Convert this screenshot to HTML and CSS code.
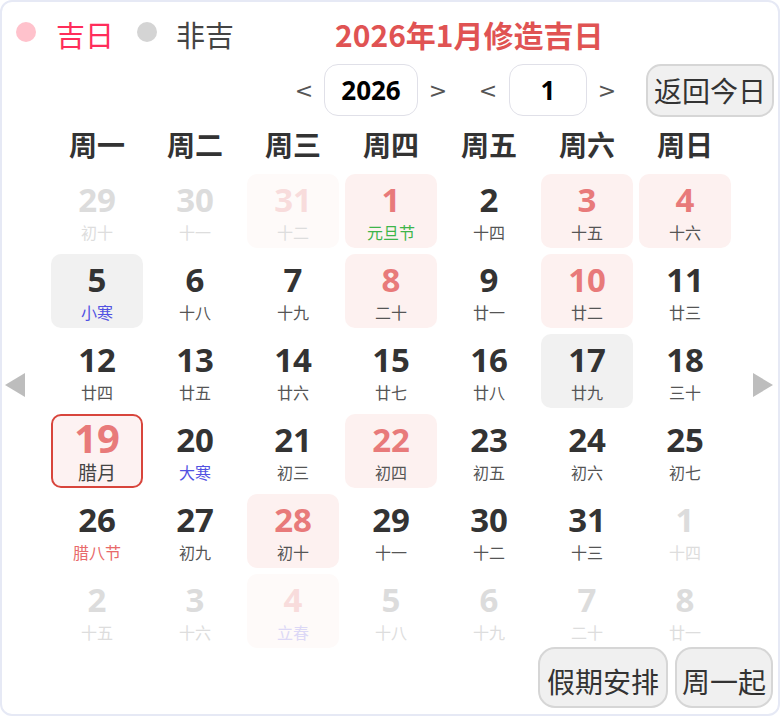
FILE: index.html
```html
<!DOCTYPE html>
<html lang="zh-CN">
<head>
<meta charset="utf-8">
<title>2026年1月修造吉日</title>
<link rel="stylesheet" href="styles.css">
</head>
<body>
<div class="cal">
  <div class="legend">
    <span class="dot dot-good"></span><span class="lg-text good">吉日</span>
    <span class="dot dot-bad"></span><span class="lg-text bad">非吉</span>
    <span class="title">2026年1月修造吉日</span>
  </div>
  <div class="controls">
    <span class="arr">&lt;</span>
    <span class="box box-year">2026</span>
    <span class="arr arr-r arr-r1">&gt;</span>
    <span class="arr arr-l2">&lt;</span>
    <span class="box box-month">1</span>
    <span class="arr arr-r arr-r2">&gt;</span>
    <span class="btn btn-today">返回今日</span>
  </div>
  <div class="body">
    <div class="side side-l"><span class="tri tri-l"></span></div>
    <div class="main">
      <div class="weekdays">
        <span>周一</span><span>周二</span><span>周三</span><span>周四</span><span>周五</span><span>周六</span><span>周日</span>
      </div>
      <div class="grid">
        <div class="cell other"><span class="num">29</span><span class="lun">初十</span></div>
        <div class="cell other"><span class="num">30</span><span class="lun">十一</span></div>
        <div class="cell other good-faded"><span class="num">31</span><span class="lun">十二</span></div>
        <div class="cell good"><span class="num">1</span><span class="lun fest-green">元旦节</span></div>
        <div class="cell"><span class="num">2</span><span class="lun">十四</span></div>
        <div class="cell good"><span class="num">3</span><span class="lun">十五</span></div>
        <div class="cell good"><span class="num">4</span><span class="lun">十六</span></div>

        <div class="cell grey"><span class="num">5</span><span class="lun term">小寒</span></div>
        <div class="cell"><span class="num">6</span><span class="lun">十八</span></div>
        <div class="cell"><span class="num">7</span><span class="lun">十九</span></div>
        <div class="cell good"><span class="num">8</span><span class="lun">二十</span></div>
        <div class="cell"><span class="num">9</span><span class="lun">廿一</span></div>
        <div class="cell good"><span class="num">10</span><span class="lun">廿二</span></div>
        <div class="cell"><span class="num">11</span><span class="lun">廿三</span></div>

        <div class="cell"><span class="num">12</span><span class="lun">廿四</span></div>
        <div class="cell"><span class="num">13</span><span class="lun">廿五</span></div>
        <div class="cell"><span class="num">14</span><span class="lun">廿六</span></div>
        <div class="cell"><span class="num">15</span><span class="lun">廿七</span></div>
        <div class="cell"><span class="num">16</span><span class="lun">廿八</span></div>
        <div class="cell grey"><span class="num">17</span><span class="lun">廿九</span></div>
        <div class="cell"><span class="num">18</span><span class="lun">三十</span></div>

        <div class="cell good selected"><span class="num">19</span><span class="lun">腊月</span></div>
        <div class="cell"><span class="num">20</span><span class="lun term">大寒</span></div>
        <div class="cell"><span class="num">21</span><span class="lun">初三</span></div>
        <div class="cell good"><span class="num">22</span><span class="lun">初四</span></div>
        <div class="cell"><span class="num">23</span><span class="lun">初五</span></div>
        <div class="cell"><span class="num">24</span><span class="lun">初六</span></div>
        <div class="cell"><span class="num">25</span><span class="lun">初七</span></div>

        <div class="cell"><span class="num">26</span><span class="lun fest-red">腊八节</span></div>
        <div class="cell"><span class="num">27</span><span class="lun">初九</span></div>
        <div class="cell good"><span class="num">28</span><span class="lun">初十</span></div>
        <div class="cell"><span class="num">29</span><span class="lun">十一</span></div>
        <div class="cell"><span class="num">30</span><span class="lun">十二</span></div>
        <div class="cell"><span class="num">31</span><span class="lun">十三</span></div>
        <div class="cell other"><span class="num">1</span><span class="lun">十四</span></div>

        <div class="cell other"><span class="num">2</span><span class="lun">十五</span></div>
        <div class="cell other"><span class="num">3</span><span class="lun">十六</span></div>
        <div class="cell other good-faded"><span class="num">4</span><span class="lun term-faded">立春</span></div>
        <div class="cell other"><span class="num">5</span><span class="lun">十八</span></div>
        <div class="cell other"><span class="num">6</span><span class="lun">十九</span></div>
        <div class="cell other"><span class="num">7</span><span class="lun">二十</span></div>
        <div class="cell other"><span class="num">8</span><span class="lun">廿一</span></div>
      </div>
    </div>
    <div class="side side-r"><span class="tri tri-r"></span></div>
  </div>
  <div class="footer">
    <span class="btn btn-foot btn-holiday">假期安排</span>
    <span class="btn btn-foot btn-week">周一起</span>
  </div>
</div>
</body>
</html>
```

FILE: styles.css
```css
* { box-sizing: border-box; }
html, body { margin: 0; padding: 0; background: #ffffff; }
body {
  font-family: "Noto Sans CJK SC", "Noto Sans", sans-serif;
  color: #333;
}
.cal {
  width: 780px;
  height: 716px;
  border: 2px solid #e6e9f5;
  border-radius: 12px;
  background: #fff;
  overflow: hidden;
}
.legend {
  display: flex;
  align-items: center;
  height: 52px;
  padding-top: 12px;
  padding-left: 14px;
}
.dot {
  width: 20px;
  height: 20px;
  border-radius: 50%;
  margin-bottom: 4px;
}
.dot-good { background: #ffc2cc; }
.dot-bad { background: #d4d4d4; margin-left: 23px; }
.lg-text {
  font-size: 29px;
  line-height: 40px;
  margin-left: 20px;
}
.good { color: #ff2d5a; }
.bad { color: #444; margin-left: 19px; }
.title {
  margin-left: 101px;
  font-size: 30px;
  line-height: 40px;
  font-weight: 700;
  color: #e05353;
}
.controls {
  display: flex;
  align-items: center;
  justify-content: flex-end;
  height: 52px;
  margin-top: 10px;
  padding-right: 4px;
}
.arr {
  font-family: "DejaVu Sans", sans-serif;
  font-size: 22px;
  color: #555;
  width: 20px;
  text-align: center;
  margin-right: 10px;
}
.arr-l2 { margin-right: 11px; }
.arr-r { margin-left: 10px; }
.arr-r1 { margin-right: 30px; }
.arr-r2 { margin-right: 29px; }
.box {
  display: flex;
  align-items: center;
  justify-content: center;
  height: 52px;
  border: 1.5px solid #e0e0e8;
  border-radius: 14px;
  background: #fff;
  font-family: "Open Sans", "Noto Sans CJK SC", sans-serif;
  font-weight: 700;
  font-size: 26px;
  color: #000;
}
.box-year { width: 94px; }
.box-month { width: 78px; }
.btn {
  display: flex;
  align-items: center;
  justify-content: center;
  background: #f0f0f0;
  border: 2px solid #d6d6d6;
  border-radius: 15px;
  font-size: 28px;
  color: #333;
}
.btn-today { width: 128px; height: 53px; }
.body {
  display: flex;
  height: 532px;
}
.side {
  display: flex;
  flex-direction: column;
  padding-top: 257px;
}
.side-l { width: 49px; padding-left: 3px; }
.side-r { width: 47px; padding-left: 22px; }
.tri {
  display: block;
  width: 0;
  height: 0;
  border-top: 12px solid transparent;
  border-bottom: 12px solid transparent;
}
.tri-l { border-right: 20px solid #bdbdbd; }
.tri-r { border-left: 20px solid #bdbdbd; }
.main { width: 680px; }
.weekdays {
  display: grid;
  grid-template-columns: repeat(7, 92px);
  column-gap: 6px;
  height: 58px;
  padding-top: 8px;
}
.weekdays span {
  text-align: center;
  font-size: 28px;
  line-height: 40px;
  font-weight: 700;
  color: #333;
}
.grid {
  display: grid;
  grid-template-columns: repeat(7, 92px);
  grid-auto-rows: 74px;
  column-gap: 6px;
  row-gap: 6px;
}
.cell {
  display: flex;
  flex-direction: column;
  align-items: center;
  border-radius: 10px;
  padding-top: 8px;
}
.num {
  font-family: "Open Sans", "Noto Sans CJK SC", sans-serif;
  font-weight: 700;
  font-size: 33px;
  line-height: 36px;
  color: #333;
}
.lun {
  font-size: 16px;
  line-height: 22px;
  margin-top: 3px;
  color: #555;
}
.cell.good { background: #fdf1f0; }
.cell.good .num { color: #e87a7a; }
.cell.grey { background: #f1f1f1; }
.cell.other .num { color: #dcdcdc; }
.cell.other .lun { color: #dddddd; }
.cell.good-faded { background: #fefaf9; }
.cell.good-faded .num { color: #f8dcdc; }
.cell .lun.fest-green { color: #3db54a; }
.cell .lun.fest-red { color: #e86a6a; }
.cell .lun.term { color: #5252e2; }
.cell .lun.term-faded { color: #dcd8f6; }
.cell.selected {
  border: 2px solid #d8453c;
  background: #fdf2f2;
  padding-top: 4px;
}
.cell.selected .num { font-size: 40px; line-height: 36px; }
.cell.selected .lun { font-size: 19px; line-height: 22px; margin-top: 5px; color: #444; }
.footer {
  display: flex;
  justify-content: flex-end;
  gap: 7px;
  padding-right: 5px;
  margin-top: -1px;
}
.btn-foot { height: 61px; border-radius: 17px; padding-top: 6px; }
.btn-holiday { width: 130px; }
.btn-week { width: 98px; }
```
